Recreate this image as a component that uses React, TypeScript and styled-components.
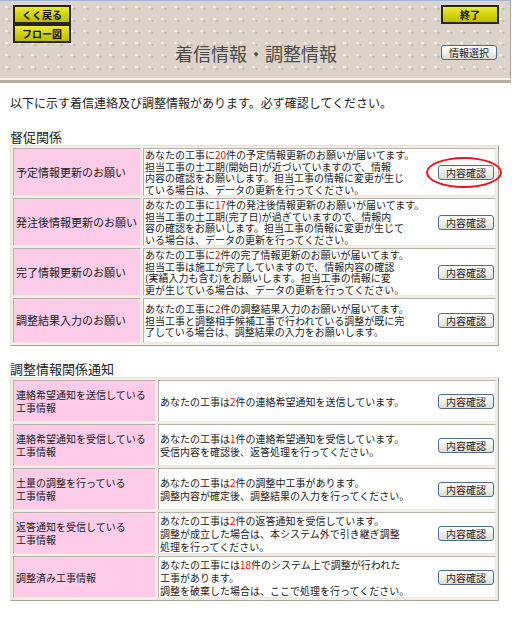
import React from "react";
import styled, { createGlobalStyle } from "styled-components";

const GlobalStyle = createGlobalStyle`
  body {
    margin: 0;
    background: #fff;
    font-family: "Noto Sans CJK JP", "Noto Sans", sans-serif;
    color: #222;
  }
`;

interface RequestRow {
  title: string[];
  lines: React.ReactNode[];
  marked?: boolean;
}

const Num = styled.span`
  color: #f00;
`;

const reminders: RequestRow[] = [
  {
    title: ["予定情報更新のお願い"],
    marked: true,
    lines: [
      <>あなたの工事に<Num>20</Num>件の予定情報更新のお願いが届いてます。</>,
      "担当工事の土工期(開始日)が近づいていますので、情報",
      "内容の確認をお願いします。担当工事の情報に変更が生じ",
      "ている場合は、データの更新を行ってください。",
    ],
  },
  {
    title: ["発注後情報更新のお願い"],
    lines: [
      <>あなたの工事に<Num>17</Num>件の発注後情報更新のお願いが届いてます。</>,
      "担当工事の土工期(完了日)が過ぎていますので、情報内",
      "容の確認をお願いします。担当工事の情報に変更が生じて",
      "いる場合は、データの更新を行ってください。",
    ],
  },
  {
    title: ["完了情報更新のお願い"],
    lines: [
      <>あなたの工事に<Num>2</Num>件の完了情報更新のお願いが届いてます。</>,
      "担当工事は施工が完了していますので、情報内容の確認",
      "(実績入力も含む)をお願いします。担当工事の情報に変",
      "更が生じている場合は、データの更新を行ってください。",
    ],
  },
  {
    title: ["調整結果入力のお願い"],
    lines: [
      <>あなたの工事に<Num>2</Num>件の調整結果入力のお願いが届いてます。</>,
      "担当工事と調整相手候補工事で行われている調整が既に完",
      "了している場合は、調整結果の入力をお願いします。",
    ],
  },
];

const notices: RequestRow[] = [
  {
    title: ["連絡希望通知を送信している", "工事情報"],
    lines: [<>あなたの工事は<Num>2</Num>件の連絡希望通知を送信しています。</>],
  },
  {
    title: ["連絡希望通知を受信している", "工事情報"],
    lines: [
      <>あなたの工事は<Num>1</Num>件の連絡希望通知を受信しています。</>,
      "受信内容を確認後、返答処理を行ってください。",
    ],
  },
  {
    title: ["土量の調整を行っている", "工事情報"],
    lines: [
      <>あなたの工事は<Num>2</Num>件の調整中工事があります。</>,
      "調整内容が確定後、調整結果の入力を行ってください。",
    ],
  },
  {
    title: ["返答通知を受信している", "工事情報"],
    lines: [
      <>あなたの工事は<Num>2</Num>件の返答通知を受信しています。</>,
      "調整が成立した場合は、本システム外で引き継ぎ調整",
      "処理を行ってください。",
    ],
  },
  {
    title: ["調整済み工事情報"],
    lines: [
      <>あなたの工事には<Num>18</Num>件のシステム上で調整が行われた</>,
      "工事があります。",
      "調整を破棄した場合は、ここで処理を行ってください。",
    ],
  },
];

const App = () => {
  return (
    <>
      <GlobalStyle />
      <Header>
        <ButtonStack>
          <YellowButton>くく戻る</YellowButton>
          <YellowButton>フロー図</YellowButton>
        </ButtonStack>
        <Title>着信情報・調整情報</Title>
        <RightColumn>
          <YellowButton>終了</YellowButton>
          <GreyButton>情報選択</GreyButton>
        </RightColumn>
      </Header>

      <Content>
        <Intro>以下に示す着信連絡及び調整情報があります。必ず確認してください。</Intro>

        <SectionTitle>督促関係</SectionTitle>
        <InfoTable>
          <tbody>
            {reminders.map((row, i) => (
              <tr key={i}>
                <LabelCell $width={122} $size={11}>
                  {row.title.map((t) => (
                    <div key={t}>{t}</div>
                  ))}
                </LabelCell>
                <BodyCell $minHeight={43} $lineHeight={11.5}>
                  <div className="inner">
                    <div className="text">
                      {row.lines.map((l, j) => (
                        <div key={j}>{l}</div>
                      ))}
                    </div>
                    <ButtonWrap>
                      <GreyButton>内容確認</GreyButton>
                      {row.marked && <Ring />}
                    </ButtonWrap>
                  </div>
                </BodyCell>
              </tr>
            ))}
          </tbody>
        </InfoTable>

        <SectionTitle $gap={15}>調整情報関係通知</SectionTitle>
        <InfoTable>
          <tbody>
            {notices.map((row, i) => (
              <tr key={i}>
                <LabelCell $width={137} $size={10}>
                  {row.title.map((t) => (
                    <div key={t}>{t}</div>
                  ))}
                </LabelCell>
                <BodyCell $minHeight={40} $lineHeight={13}>
                  <div className="inner">
                    <div className="text">
                      {row.lines.map((l, j) => (
                        <div key={j}>{l}</div>
                      ))}
                    </div>
                    <ButtonWrap>
                      <GreyButton>内容確認</GreyButton>
                    </ButtonWrap>
                  </div>
                </BodyCell>
              </tr>
            ))}
          </tbody>
        </InfoTable>
      </Content>
    </>
  );
};

const Header = styled.header`
  width: 511px;
  height: 80px;
  box-sizing: border-box;
  display: grid;
  grid-template-columns: 58px 1fr 58px;
  padding: 4px 11px 0 13px;
  border-top: 1px solid #9fb6d6;
  border-right: 1px solid #a9a49c;
  border-bottom: 2px solid #f6f3ee;
  box-shadow: 0 3px 0 #b4ada2;
  background-color: #dcd4cb;
  background-image: radial-gradient(circle, #f4f0ea 1px, transparent 1.5px),
    radial-gradient(circle, #c2b7ab 0.9px, transparent 1.3px);
  background-size: 13px 12px, 13px 12px;
  background-position: 0 0, 3px 2px;
`;

const ButtonStack = styled.div`
  display: flex;
  flex-direction: column;
`;

const RightColumn = styled.div`
  display: flex;
  flex-direction: column;
  align-items: stretch;
  gap: 21px;
`;

const YellowButton = styled.button`
  height: 19px;
  width: 58px;
  box-sizing: border-box;
  padding: 0;
  border: 2px solid #262616;
  background: linear-gradient(#ecec3a, #cfcf00 60%, #bcbc00);
  font-family: "Noto Sans CJK JP", sans-serif;
  font-size: 10px;
  font-weight: 700;
  color: #111;
  line-height: 14px;
  cursor: pointer;
`;

const GreyButton = styled.button`
  width: 56px;
  height: 15px;
  box-sizing: border-box;
  padding: 0;
  border: 1px solid #4f6b8e;
  border-radius: 3px;
  background: linear-gradient(#ffffff, #f0f0ec 50%, #dcdcd6);
  font-family: "Noto Sans CJK JP", sans-serif;
  font-size: 10px;
  line-height: 13px;
  color: #222;
  cursor: pointer;
`;

const Title = styled.h1`
  margin: 35px 0 0;
  text-align: center;
  font-size: 18px;
  font-weight: 400;
  line-height: 26px;
  color: #4a4a4a;
`;

const Content = styled.main`
  padding: 15px 0 20px 10px;
`;

const Intro = styled.p`
  margin: 0;
  font-size: 12px;
  line-height: 16px;
  color: #222;
`;

const SectionTitle = styled.h2<{ $gap?: number }>`
  margin: ${(p) => p.$gap ?? 18}px 0 0;
  font-size: 13px;
  font-weight: 400;
  line-height: 16px;
  color: #222;
`;

const InfoTable = styled.table`
  width: 489px;
  border-collapse: separate;
  border-spacing: 2px;
  border: 1px solid;
  border-color: #e6e2da #a8a296 #a8a296 #e6e2da;
  background: #f1eee8;
`;

const LabelCell = styled.td<{ $width: number; $size: number }>`
  width: ${(p) => p.$width}px;
  padding: 0 2px;
  background: #fccce8;
  border: 1px solid;
  border-color: #b8b2a8 #ece8e2 #ece8e2 #b8b2a8;
  font-size: ${(p) => p.$size}px;
  line-height: 13px;
  color: #222;
  vertical-align: middle;
  white-space: nowrap;
`;

const BodyCell = styled.td<{ $minHeight: number; $lineHeight: number }>`
  padding: 0 1px 0 1px;
  background: #fff;
  border: 1px solid;
  border-color: #b8b2a8 #ece8e2 #ece8e2 #b8b2a8;
  font-size: 10px;
  line-height: ${(p) => p.$lineHeight}px;
  color: #222;
  .inner {
    display: flex;
    align-items: center;
    min-height: ${(p) => p.$minHeight}px;
  }
  .text {
    flex: 1;
    white-space: nowrap;
  }
`;

const ButtonWrap = styled.div`
  position: relative;
  display: flex;
`;

const Ring = styled.div`
  position: absolute;
  left: -12px;
  right: -8px;
  top: -8px;
  bottom: -8px;
  border: 2.5px solid #e8141c;
  border-radius: 50%;
  pointer-events: none;
`;

export default App;
